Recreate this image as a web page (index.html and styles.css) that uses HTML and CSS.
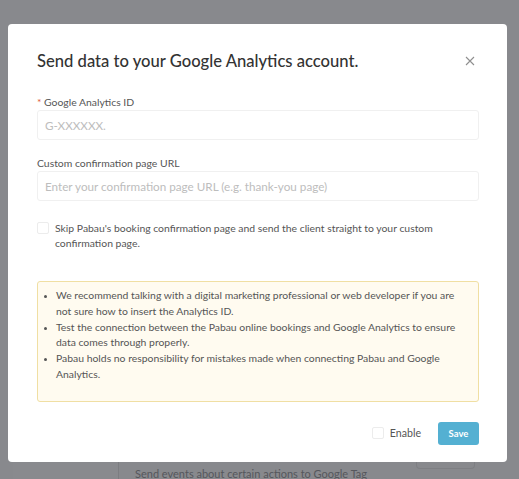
FILE: index.html
```html
<!DOCTYPE html>
<html lang="en">
<head>
  <meta charset="UTF-8">
  <title>Google Analytics</title>
  <link rel="stylesheet" href="styles.css">
</head>
<body>
  <div class="modal">
    <div class="modal-header">
      <h1>Send data to your Google Analytics account.</h1>
      <button class="close" aria-label="Close">
        <svg width="10" height="10" viewBox="0 0 10 10"><path d="M1 1L9 9M9 1L1 9" stroke="#8f8f8f" stroke-width="1.1" fill="none"/></svg>
      </button>
    </div>

    <label class="field-label"><span class="req">*</span> Google Analytics ID</label>
    <input class="field" type="text" placeholder="G-XXXXXX.">

    <label class="field-label">Custom confirmation page URL</label>
    <input class="field" type="text" placeholder="Enter your confirmation page URL (e.g. thank-you page)">

    <label class="skip">
      <span class="box"></span>
      <span>Skip Pabau's booking confirmation page and send the client straight to your custom confirmation page.</span>
    </label>

    <div class="notice">
      <ul>
        <li>We recommend talking with a digital marketing professional or web developer if you are not sure how to insert the Analytics ID.</li>
        <li>Test the connection between the Pabau online bookings and Google Analytics to ensure data comes through properly.</li>
        <li>Pabau holds no responsibility for mistakes made when connecting Pabau and Google Analytics.</li>
      </ul>
    </div>

    <div class="modal-footer">
      <label class="enable"><span class="box"></span> Enable</label>
      <button class="save">Save</button>
    </div>
  </div>

  <!-- page behind the overlay -->
  <div class="behind">
    <div class="behind-side"></div>
    <div class="behind-main">Send events about certain actions to Google Tag</div>
    <div class="behind-btn"></div>
  </div>
</body>
</html>
```

FILE: styles.css
```css
body {
  margin: 0;
  padding-top: 24px;
  background-color: #88898d;
  font-family: 'Lato', 'Liberation Sans', sans-serif;
  height: 455px;
  overflow: hidden;
}

.modal {
  background-color: #fff;
  margin: 0 12px 0 8px;
  border-radius: 4px;
  padding: 24px 28px 17px 29px;
  box-sizing: border-box;
  height: 438px;
  color: #555;
}

.modal-header {
  display: flex;
  justify-content: space-between;
  align-items: center;
  margin-bottom: 21px;
}

h1 {
  margin: 0;
  font-size: 16.6px;
  font-weight: 500;
  color: #333;
  line-height: 26px;
}

.close {
  border: none;
  background: transparent;
  padding: 0;
  margin-right: 4px;
  width: 10px;
  height: 10px;
  display: flex;
}

.field-label {
  display: block;
  font-size: 10.4px;
  color: #555;
  line-height: 14px;
  margin-bottom: 1px;
}

.req {
  color: #e05a3a;
}

.field {
  display: block;
  width: 100%;
  box-sizing: border-box;
  height: 30px;
  border: 1px solid #f0f0f0;
  border-radius: 3px;
  padding: 0 7px;
  font-family: inherit;
  font-size: 11.7px;
  margin: 0 0 16px;
  outline: none;
}

.field::placeholder {
  color: #bdbdbd;
}

.skip {
  display: flex;
  gap: 6px;
  font-size: 10.4px;
  line-height: 15px;
  color: #555;
  margin-top: 20px;
}

.box {
  flex: none;
  width: 10px;
  height: 10px;
  border: 1px solid #ececec;
  border-radius: 2px;
  margin-top: 1px;
}

.notice {
  margin-top: 30px;
  background-color: #fffbf0;
  border: 1px solid #f0dfa3;
  border-radius: 3px;
  padding: 6px 20px 18px 11px;
}

.notice ul {
  margin: 0;
  padding-left: 7px;
  font-size: 10.4px;
  line-height: 15.8px;
  color: #555;
}

.notice li::marker {
  font-size: 8px;
}

.modal-footer {
  display: flex;
  justify-content: flex-end;
  align-items: center;
  margin-top: 20px;
}

.enable {
  display: flex;
  align-items: center;
  gap: 6px;
  font-size: 10.6px;
  color: #555;
  margin-right: 17px;
}

.enable .box {
  margin-top: 0;
}

.save {
  background-color: #54b0d2;
  color: #fff;
  border: none;
  border-radius: 3px;
  width: 41px;
  height: 23px;
  font-family: inherit;
  font-size: 9.5px;
  font-weight: bold;
  padding: 0;
}

.behind {
  display: flex;
  height: 20px;
  margin-left: 13px;
}

.behind-side {
  width: 105px;
  border-right: 1px solid #7c7d81;
  background-color: #898a8e;
}

.behind-main {
  flex: 1;
  padding: 5px 0 0 16px;
  font-size: 11px;
  color: #55575c;
}

.behind-btn {
  width: 57px;
  height: 6px;
  border: 1px solid #7e7f83;
  border-top: none;
  border-radius: 0 0 4px 4px;
  margin-right: 44px;
}
```
